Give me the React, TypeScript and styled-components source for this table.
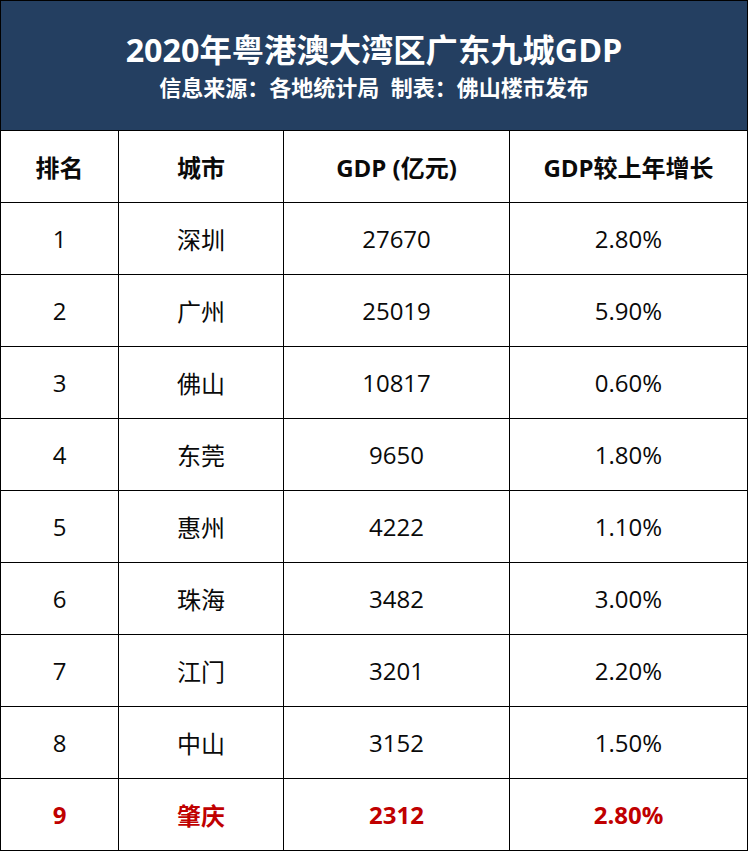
import React from "react";
import styled, { createGlobalStyle } from "styled-components";

const GlobalStyle = createGlobalStyle`
  html, body {
    margin: 0;
    padding: 0;
    background: #ffffff;
  }
  body {
    font-family: "Open Sans", "Noto Sans CJK SC", sans-serif;
  }
`;

const Sheet = styled.div`
  width: 748px;
  border-left: 1px solid #000;
  border-top: 1px solid #000;
  box-sizing: border-box;
  display: grid;
  grid-template-columns: 118px 165px 226px 238px;
  grid-template-rows: 130px;
  grid-auto-rows: 72px;
`;

const Banner = styled.div`
  grid-column: 1 / -1;
  box-sizing: border-box;
  background: #243f61;
  border-right: 1px solid #000;
  border-bottom: 1px solid #000;
  color: #ffffff;
  display: flex;
  flex-direction: column;
  align-items: center;
  padding-top: 28px;
`;

const Title = styled.h1`
  margin: 0;
  font-size: 32.3px;
  line-height: 40px;
  font-weight: 700;
`;

const Subtitle = styled.div`
  font-size: 22px;
  line-height: 36px;
  font-weight: 700;
`;

const Cell = styled.div<{ $head?: boolean; $hot?: boolean }>`
  box-sizing: border-box;
  border-right: 1px solid #000;
  border-bottom: 1px solid #000;
  display: flex;
  align-items: center;
  justify-content: center;
  font-size: 24px;
  font-weight: ${(p) => (p.$head || p.$hot ? 700 : 400)};
  color: ${(p) => (p.$hot ? "#c00000" : "#0a0a0a")};
`;

const rows = [
  ["1", "深圳", "27670", "2.80%"],
  ["2", "广州", "25019", "5.90%"],
  ["3", "佛山", "10817", "0.60%"],
  ["4", "东莞", "9650", "1.80%"],
  ["5", "惠州", "4222", "1.10%"],
  ["6", "珠海", "3482", "3.00%"],
  ["7", "江门", "3201", "2.20%"],
  ["8", "中山", "3152", "1.50%"],
  ["9", "肇庆", "2312", "2.80%"],
];

const heads = ["排名", "城市", "GDP (亿元)", "GDP较上年增长"];

const App: React.FC = () => {
  return (
    <>
      <GlobalStyle />
      <Sheet>
        <Banner>
          <Title>2020年粤港澳大湾区广东九城GDP</Title>
          <Subtitle>信息来源：各地统计局&nbsp;&nbsp;制表：佛山楼市发布</Subtitle>
        </Banner>
        {heads.map((h) => (
          <Cell key={h} $head>
            {h}
          </Cell>
        ))}
        {rows.map((r) =>
          r.map((v, i) => (
            <Cell key={r[0] + "-" + i} $hot={r[1] === "肇庆"}>
              {v}
            </Cell>
          ))
        )}
      </Sheet>
    </>
  );
};

export default App;
